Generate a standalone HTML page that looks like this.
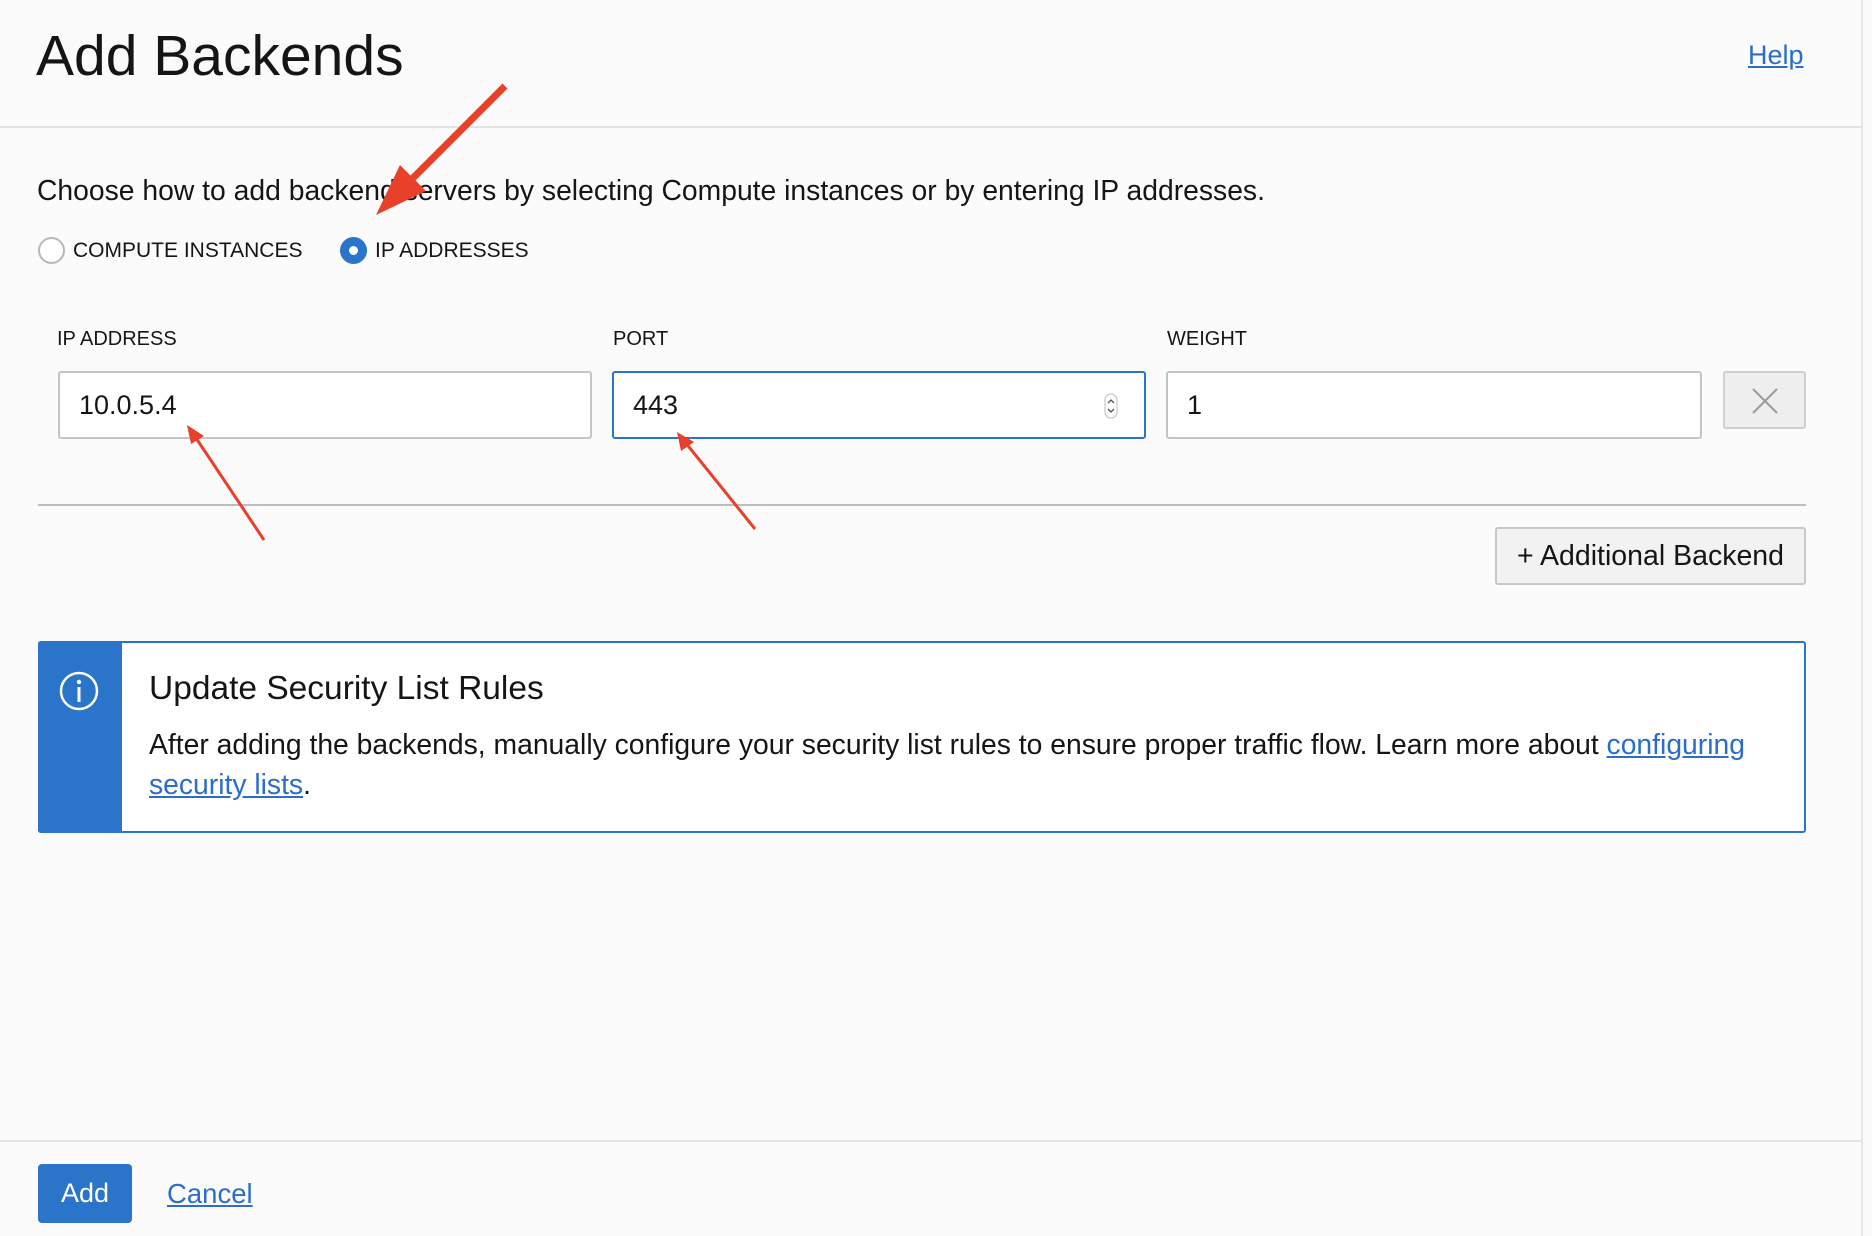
<!DOCTYPE html>
<html><head><meta charset="utf-8"><style>
*{box-sizing:border-box;margin:0;padding:0}
body{width:1872px;height:1236px;background:#fbfbfb;font-family:"Liberation Sans",Arial,sans-serif;color:#161513;position:relative;overflow:hidden}
.a{position:absolute;white-space:nowrap}
.lnk{color:#2b6dc9;text-decoration:underline}
.inp{position:absolute;top:371px;height:68px;border:2px solid #c4c4c6;border-radius:3px;background:#fff;font-size:27px;padding-left:19px;line-height:64px}
.lbl{position:absolute;top:328px;font-size:20px;color:#161513}
.radio{position:absolute;top:237px;width:27px;height:27px;border-radius:50%}
</style></head><body>
<div class="a" style="left:36px;top:23px;font-size:57px;line-height:66px">Add Backends</div>
<div class="a lnk" style="left:1748px;top:40px;font-size:27px">Help</div>
<div class="a" style="left:0;top:126px;width:1862px;height:2px;background:#e3e3e3"></div>
<div class="a" style="left:1861px;top:0;width:2px;height:1236px;background:#e6e6e6"></div>
<div class="a" style="left:37px;top:174px;font-size:28.3px">Choose how to add backend servers by selecting Compute instances or by entering IP addresses.</div>
<div class="radio" style="left:38px;border:2px solid #b8b8b8;background:#fff"></div>
<div class="a" style="left:73px;top:239px;font-size:21px">COMPUTE INSTANCES</div>
<div class="radio" style="left:340px;background:#2a74c9"><div style="position:absolute;left:9px;top:9px;width:9px;height:9px;border-radius:50%;background:#fff"></div></div>
<div class="a" style="left:375px;top:239px;font-size:21px">IP ADDRESSES</div>
<div class="lbl" style="left:57px">IP ADDRESS</div>
<div class="lbl" style="left:613px">PORT</div>
<div class="lbl" style="left:1167px">WEIGHT</div>
<div class="inp" style="left:58px;width:534px">10.0.5.4</div>
<div class="inp" style="left:612px;width:534px;border-color:#2a74c9">443
<svg style="position:absolute;right:26px;top:20px" width="14" height="26" viewBox="0 0 14 26"><rect x="1" y="1" width="12" height="24" rx="6" fill="none" stroke="#bbb"/><path d="M4 10l3-3 3 3M4 16l3 3 3-3" fill="none" stroke="#555" stroke-width="1.3"/></svg></div>
<div class="inp" style="left:1166px;width:536px">1</div>
<div class="a" style="left:1723px;top:371px;width:83px;height:58px;border:2px solid #cfcfcf;border-radius:3px;background:#eee">
<svg style="position:absolute;left:27px;top:15px" width="26" height="26" viewBox="0 0 26 26"><path d="M1 1L25 25M25 1L1 25" stroke="#9a9a9a" stroke-width="2"/></svg></div>
<div class="a" style="left:38px;top:504px;width:1768px;height:2px;background:#bdbdbd"></div>
<div class="a" style="left:1495px;top:527px;width:311px;height:58px;border:2px solid #c8c8c8;border-radius:3px;background:#f2f2f2;font-size:28.5px;line-height:54px;text-align:center">+ Additional Backend</div>
<div class="a" style="left:38px;top:641px;width:1768px;height:192px;border:2px solid #2a74c9;border-radius:3px;background:#fff"></div>
<div class="a" style="left:38px;top:641px;width:84px;height:192px;background:#2a74c9;border-radius:3px 0 0 3px"></div>
<svg class="a" style="left:59px;top:671px" width="40" height="40" viewBox="0 0 40 40"><circle cx="20" cy="20" r="18" fill="none" stroke="#fff" stroke-width="2.5"/><circle cx="20" cy="11" r="2.2" fill="#fff"/><rect x="18.5" y="16" width="3" height="15" fill="#fff"/></svg>
<div class="a" style="left:149px;top:670px;font-size:33.5px">Update Security List Rules</div>
<div class="a" style="left:149px;top:724px;font-size:28.3px;line-height:40px;white-space:normal;width:1640px">After adding the backends, manually configure your security list rules to ensure proper traffic flow. Learn more about <span class="lnk">configuring security lists</span>.</div>
<div class="a" style="left:0;top:1140px;width:1862px;height:2px;background:#e3e3e3"></div>
<div class="a" style="left:38px;top:1164px;width:94px;height:59px;background:#2a74c9;border-radius:4px;color:#fff;font-size:27px;line-height:59px;text-align:center">Add</div>
<div class="a lnk" style="left:167px;top:1178px;font-size:27.5px">Cancel</div>
<svg class="a" style="left:0;top:0" width="1872" height="1236">
<g stroke="#e8402a" fill="#e8402a">
<line x1="505" y1="86" x2="395" y2="196" stroke-width="7"/>
<polygon points="376,215 400,165 426,191" stroke="none"/>
<line x1="264" y1="540" x2="194" y2="435" stroke-width="3"/>
<polygon points="187,425 204,436 191,444" stroke="none"/>
<line x1="755" y1="529" x2="685" y2="442" stroke-width="3"/>
<polygon points="677,432 694,442 681,451" stroke="none"/>
</g></svg>
</body></html>
